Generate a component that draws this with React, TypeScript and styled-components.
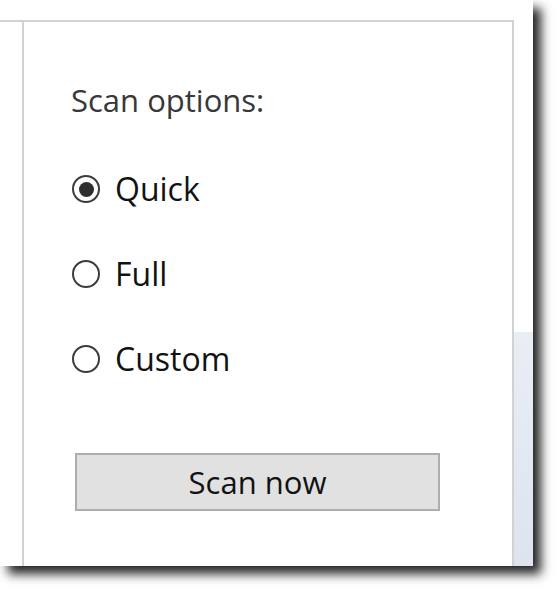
import React from "react";
import styled, { createGlobalStyle } from "styled-components";

const Global = createGlobalStyle`
  html, body { margin: 0; padding: 0; background: #ffffff; }
  body { width: 560px; height: 593px; overflow: hidden; font-family: "Open Sans", "Noto Sans", sans-serif; }
  #root { width: 560px; height: 593px; }
`;

const Window = styled.div`
  width: 533px;
  height: 566px;
  background: #ffffff;
  box-shadow: 8px 8px 10px rgba(0, 0, 0, 0.85);
  display: flex;
  flex-direction: column;
`;

const TopStrip = styled.div`
  height: 20px;
  flex: none;
`;

const Body = styled.div`
  flex: 1;
  display: flex;
  min-height: 0;
`;

const LeftPane = styled.div`
  width: 22px;
  flex: none;
  border-top: 2px solid #d2d2d2;
  border-right: 2px solid #d2d2d2;
`;

const Panel = styled.div`
  flex: none;
  width: 490px;
  border-top: 2px solid #d2d2d2;
  border-right: 2px solid #d2d2d2;
  padding: 58px 0 0 48px;
  box-sizing: border-box;
  display: flex;
  flex-direction: column;
  align-items: flex-start;
`;

const RightStrip = styled.div`
  flex: 1;
  display: flex;
  flex-direction: column;
`;

const StripTop = styled.div`
  height: 312px;
  flex: none;
`;

const StripBottom = styled.div`
  flex: 1;
  background: linear-gradient(180deg, #e9eef5 0%, #dde4ee 100%);
`;

const Heading = styled.div`
  font-size: 31px;
  line-height: 40px;
  color: #383838;
  margin-bottom: 49px;
  margin-left: -1px;
`;

const RadioList = styled.div`
  display: flex;
  flex-direction: column;
  gap: 45px;
`;

const RadioRow = styled.label`
  display: flex;
  align-items: center;
  gap: 15px;
  font-size: 32px;
  line-height: 40px;
  color: #121212;
`;

const Circle = styled.span<{ $checked?: boolean }>`
  width: 24px;
  height: 24px;
  border-radius: 50%;
  border: 2px solid #3c3c3c;
  background: #ffffff;
  display: flex;
  align-items: center;
  justify-content: center;
  flex: none;
  &::after {
    content: "";
    width: 15px;
    height: 15px;
    border-radius: 50%;
    background: ${(p) => (p.$checked ? "#2e2e2e" : "transparent")};
  }
`;

const Button = styled.div`
  margin-top: 74px;
  margin-left: 3px;
  width: 361px;
  height: 54px;
  box-sizing: content-box;
  border: 2px solid #adadad;
  background: #e1e1e1;
  display: flex;
  align-items: center;
  justify-content: center;
  font-size: 31px;
  color: #121212;
`;

const options = [
  { label: "Quick", checked: true },
  { label: "Full", checked: false },
  { label: "Custom", checked: false },
];

export default function App() {
  return (
    <>
      <Global />
      <Window>
        <TopStrip />
        <Body>
          <LeftPane />
          <Panel>
            <Heading>Scan options:</Heading>
            <RadioList>
              {options.map((o) => (
                <RadioRow key={o.label}>
                  <Circle $checked={o.checked} />
                  {o.label}
                </RadioRow>
              ))}
            </RadioList>
            <Button>Scan now</Button>
          </Panel>
          <RightStrip>
            <StripTop />
            <StripBottom />
          </RightStrip>
        </Body>
      </Window>
    </>
  );
}
